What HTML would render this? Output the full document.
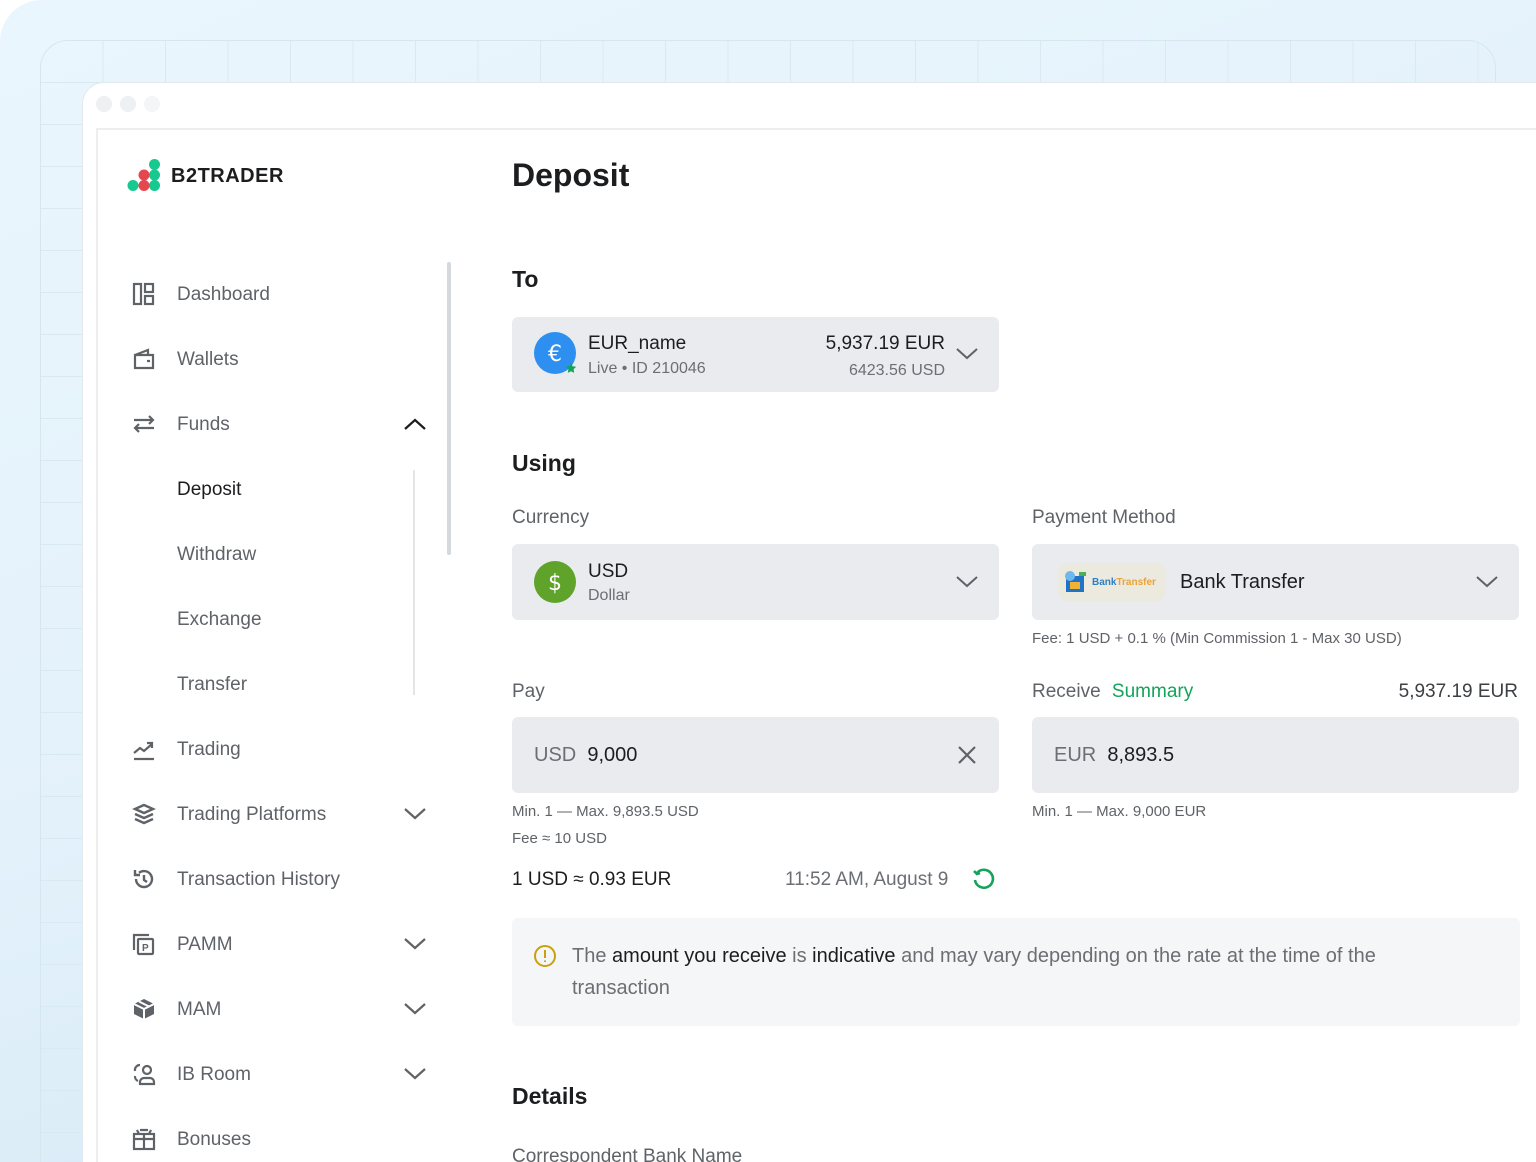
<!DOCTYPE html>
<html style="width:1536px;height:1162px;overflow:hidden"><head><meta charset="utf-8"><style>
*{margin:0;padding:0;box-sizing:border-box}
body{width:1536px;height:1162px;overflow:hidden;background:#fff;font-family:"Liberation Sans",sans-serif;position:relative}
.clip{position:absolute;left:0;top:0;width:1536px;height:1162px;overflow:hidden}
.bg{position:absolute;left:0;top:0;width:1536px;height:1162px;border-radius:42px 0 0 0;background:linear-gradient(160deg,#eaf6fd 0%,#e3f1fb 50%,#cfe5f3 100%);overflow:hidden}
.outer{position:absolute;left:40px;top:40px;width:1456px;height:1122px;border:1px solid #d6e6f0;border-bottom:none;border-radius:28px 28px 0 0;
background-image:linear-gradient(#d9e9f3 1px,transparent 1px),linear-gradient(90deg,#d9e9f3 1px,transparent 1px);background-size:62.5px 42px;background-position:-1px -1px}
.win{position:absolute;left:82px;top:82px;width:1454px;height:1080px;background:#fff;border-radius:22px 0 0 0;border:1px solid #e3eaef;border-right:none;border-bottom:none}
.dot{position:absolute;top:96px;width:16px;height:16px;border-radius:50%;background:#eef0f2}
.inner{position:absolute;left:96px;top:128px;width:1440px;height:1034px;border-left:2px solid #eceef0;border-top:2px solid #eceef0}
.t{position:absolute;white-space:nowrap}
.nav{position:absolute;left:177px;font-size:19px;color:#5f6368;transform:translateY(-45%)}
.ic{position:absolute;left:132px;transform:translateY(-50%)}
.chev{position:absolute;left:404px;transform:translateY(-50%)}
.box{position:absolute;background:#e9ebee;border-radius:6px}
.lbl{font-size:19px;color:#5f6368}
.h{font-weight:bold;color:#1c1d1f}
</style></head><body><div class="clip">
<div class="bg"><div class="outer"></div></div>
<div class="win"></div>
<div class="dot" style="left:96px"></div><div class="dot" style="left:120px"></div><div class="dot" style="left:144px;background:#f3f5f6"></div>
<div class="inner"></div>

<svg class="t" style="left:126px;top:158px" width="36" height="36"><circle cx="28.5" cy="6.5" r="5.5" fill="#17c98f"/><circle cx="28.5" cy="17" r="5.5" fill="#17c98f"/><circle cx="28.5" cy="27.5" r="5.5" fill="#17c98f"/><circle cx="18" cy="17" r="5.5" fill="#e5474e"/><circle cx="18" cy="27.5" r="5.5" fill="#e5474e"/><circle cx="7" cy="27.5" r="5.5" fill="#17c98f"/></svg>
<div class="t" style="left:171px;top:165px;font-size:20px;font-weight:bold;color:#1c1d1f;letter-spacing:.5px">B2TRADER</div>

<div style="position:absolute;left:447px;top:262px;width:4px;height:293px;background:#d5d8dc;border-radius:2px"></div>
<div style="position:absolute;left:413px;top:470px;width:2px;height:225px;background:#e3e5e8"></div>

<svg class="ic" style="top:294px" width="24" height="24" fill="none" stroke="#5f6368" stroke-width="2.2"><rect x="2" y="2" width="7" height="20"/><rect x="13" y="2" width="8" height="8"/><rect x="13" y="14" width="8" height="8"/></svg><div class="nav" style="top:294px">Dashboard</div>
<svg class="ic" style="top:359px" width="24" height="24" fill="none" stroke="#5f6368" stroke-width="2.2"><path d="M3 8h18v13H3zM3 8l13-5v5M15 14h3"/></svg><div class="nav" style="top:359px">Wallets</div>
<svg class="ic" style="top:424px" width="24" height="24" fill="none" stroke="#5f6368" stroke-width="2.2"><path d="M2 8h19M17 4l4 4-4 4M22 16H3M7 12l-4 4 4 4"/></svg><div class="nav" style="top:424px">Funds</div>
<svg class="chev" style="top:424px" width="22" height="14" fill="none" stroke="#1c1d1f" stroke-width="2.2"><path d="M1 12L11 3l10 9"/></svg>
<div class="nav" style="top:489px;color:#1c1d1f">Deposit</div>
<div class="nav" style="top:554px">Withdraw</div>
<div class="nav" style="top:619px">Exchange</div>
<div class="nav" style="top:684px">Transfer</div>
<svg class="ic" style="top:749px" width="24" height="24" fill="none" stroke="#5f6368" stroke-width="2.2"><path d="M2 22h20M2 16l6-5 4 3 8-7M15 6h5v5"/></svg><div class="nav" style="top:749px">Trading</div>
<svg class="ic" style="top:814px" width="24" height="24" fill="none" stroke="#5f6368" stroke-width="2.4"><path d="M12 3l9 4-9 4-9-4zM3 12l9 4 9-4M3 17l9 4 9-4"/></svg><div class="nav" style="top:814px">Trading Platforms</div>
<svg class="chev" style="top:814px" width="22" height="14" fill="none" stroke="#5f6368" stroke-width="2.2"><path d="M1 2l10 9 10-9"/></svg>
<svg class="ic" style="top:879px" width="24" height="24" fill="none" stroke="#5f6368" stroke-width="2.4"><path d="M4 12a8 8 0 1 0 3-6.2M3 3v5h5M12 8v5l3 2"/></svg><div class="nav" style="top:879px">Transaction History</div>
<svg class="ic" style="top:944px" width="24" height="24" fill="none" stroke="#5f6368" stroke-width="2.2"><path d="M2 18V3h15"/><rect x="6" y="7" width="15" height="15" rx="1"/><text x="10" y="19" font-size="10" font-weight="bold" fill="#5f6368" stroke="none" font-family="Liberation Sans">P</text></svg><div class="nav" style="top:944px">PAMM</div>
<svg class="chev" style="top:944px" width="22" height="14" fill="none" stroke="#5f6368" stroke-width="2.2"><path d="M1 2l10 9 10-9"/></svg>
<svg class="ic" style="top:1009px" width="24" height="24"><path d="M12 2l10 5v10l-10 5-10-5V7z" fill="#5f6368"/><path d="M2 7l10 5 10-5M12 12v10M7 4.5l10 5" stroke="#fff" stroke-width="2" fill="none"/></svg><div class="nav" style="top:1009px">MAM</div>
<svg class="chev" style="top:1009px" width="22" height="14" fill="none" stroke="#5f6368" stroke-width="2.2"><path d="M1 2l10 9 10-9"/></svg>
<svg class="ic" style="top:1074px" width="24" height="24" fill="none" stroke="#5f6368" stroke-width="2.2"><circle cx="15" cy="8" r="4"/><path d="M8 22v-2a4 4 0 0 1 4-4h6a4 4 0 0 1 4 4v2zM3 9a5 5 0 0 1 5-6M3 14a5 5 0 0 0 3 5"/></svg><div class="nav" style="top:1074px">IB Room</div>
<svg class="chev" style="top:1074px" width="22" height="14" fill="none" stroke="#5f6368" stroke-width="2.2"><path d="M1 2l10 9 10-9"/></svg>
<svg class="ic" style="top:1139px" width="24" height="24" fill="none" stroke="#5f6368" stroke-width="2.2"><rect x="2" y="7" width="20" height="15"/><path d="M2 12h20M12 7v15M7 7l-2-4M17 7l2-4M8 3h8"/></svg><div class="nav" style="top:1139px">Bonuses</div>

<div class="t h" style="left:512px;top:157px;font-size:32px">Deposit</div>
<div class="t h" style="left:512px;top:266px;font-size:23px">To</div>
<div class="box" style="left:512px;top:317px;width:487px;height:75px"></div>
<svg class="t" style="left:533px;top:332px" width="46" height="46"><circle cx="22" cy="21" r="21" fill="#2d8ff0"/><text x="22" y="29" font-size="22" fill="#fff" text-anchor="middle" font-family="DejaVu Sans">€</text><path d="M38 31l1.6 3.3 3.6.5-2.6 2.5.6 3.6-3.2-1.7-3.2 1.7.6-3.6-2.6-2.5 3.6-.5z" fill="#14a35a"/></svg>
<div class="t" style="left:588px;top:333px;font-size:19px;color:#1c1d1f">EUR_name</div>
<div class="t" style="left:588px;top:360px;font-size:16px;color:#6b6f74">Live • ID 210046</div>
<div class="t" style="right:591px;top:333px;font-size:19px;color:#1c1d1f">5,937.19 EUR</div>
<div class="t" style="right:591px;top:362px;font-size:16px;color:#6b6f74">6423.56 USD</div>
<svg class="t" style="left:956px;top:347px" width="22" height="14" fill="none" stroke="#5f6368" stroke-width="2"><path d="M1 2l10 9 10-9"/></svg>

<div class="t h" style="left:512px;top:450px;font-size:23px">Using</div>
<div class="t lbl" style="left:512px;top:507px">Currency</div>
<div class="t lbl" style="left:1032px;top:507px">Payment Method</div>
<div class="box" style="left:512px;top:544px;width:487px;height:76px"></div>
<svg class="t" style="left:533px;top:560px" width="44" height="44"><circle cx="22" cy="22" r="21" fill="#5fa32a"/><text x="22" y="30" font-size="22" fill="#fff" text-anchor="middle" font-family="DejaVu Sans">$</text></svg>
<div class="t" style="left:588px;top:561px;font-size:19px;color:#1c1d1f">USD</div>
<div class="t" style="left:588px;top:587px;font-size:16px;color:#6b6f74">Dollar</div>
<svg class="t" style="left:956px;top:575px" width="22" height="14" fill="none" stroke="#5f6368" stroke-width="2"><path d="M1 2l10 9 10-9"/></svg>
<div class="box" style="left:1032px;top:544px;width:487px;height:76px"></div>
<div class="t" style="left:1058px;top:563px;width:108px;height:38px;background:#ece9df;border-radius:10px"></div>
<svg class="t" style="left:1064px;top:570px" width="24" height="24"><rect x="2" y="6" width="18" height="16" fill="#1f74c7"/><circle cx="6" cy="6" r="5" fill="#6cb8ef"/><rect x="15" y="2" width="7" height="4" fill="#4caf50"/><rect x="6" y="12" width="10" height="7" fill="#f2b233"/></svg>
<div class="t" style="left:1092px;top:577px;font-size:10px;font-weight:bold;color:#2d7fc9">Bank<span style="color:#e8a33a">Transfer</span></div>
<div class="t" style="left:1180px;top:571px;font-size:20px;color:#1c1d1f">Bank Transfer</div>
<svg class="t" style="left:1476px;top:575px" width="22" height="14" fill="none" stroke="#5f6368" stroke-width="2"><path d="M1 2l10 9 10-9"/></svg>
<div class="t" style="left:1032px;top:630px;font-size:15px;color:#5f6368">Fee: 1 USD + 0.1 % (Min Commission 1 - Max 30 USD)</div>

<div class="t lbl" style="left:512px;top:681px">Pay</div>
<div class="t lbl" style="left:1032px;top:681px">Receive <span style="color:#14a35a;margin-left:6px">Summary</span></div>
<div class="t" style="right:18px;top:681px;font-size:19px;color:#3c3f43">5,937.19 EUR</div>
<div class="box" style="left:512px;top:717px;width:487px;height:76px"></div>
<div class="t" style="left:534px;top:744px;font-size:20px;color:#6b6f74">USD&nbsp; <span style="color:#1c1d1f">9,000</span></div>
<svg class="t" style="left:957px;top:745px" width="20" height="20" stroke="#5f6368" stroke-width="2.2"><path d="M2 2l16 16M18 2L2 18"/></svg>
<div class="box" style="left:1032px;top:717px;width:487px;height:76px"></div>
<div class="t" style="left:1054px;top:744px;font-size:20px;color:#6b6f74">EUR&nbsp; <span style="color:#1c1d1f">8,893.5</span></div>
<div class="t" style="left:512px;top:803px;font-size:15px;color:#5f6368">Min. 1 — Max. 9,893.5 USD</div>
<div class="t" style="left:512px;top:830px;font-size:15px;color:#5f6368">Fee ≈ 10 USD</div>
<div class="t" style="left:1032px;top:803px;font-size:15px;color:#5f6368">Min. 1 — Max. 9,000 EUR</div>

<div class="t" style="left:512px;top:869px;font-size:19px;color:#1c1d1f">1 USD ≈ 0.93 EUR</div>
<div class="t" style="left:785px;top:869px;font-size:19px;color:#6b6f74">11:52 AM, August 9</div>
<svg class="t" style="left:971px;top:868px" width="24" height="24" fill="none" stroke="#14a35a" stroke-width="2.6"><path d="M6 5a9 9 0 1 1-2 7M3 3l3 3 3-1"/></svg>

<div class="t" style="left:512px;top:918px;width:1008px;height:108px;background:#f5f6f8;border-radius:6px"></div>
<svg class="t" style="left:533px;top:944px" width="24" height="24" fill="none" stroke="#c9a10e" stroke-width="2"><circle cx="12" cy="12" r="10"/><path d="M12 6v8M12 16.5v1.5"/></svg>
<div class="t" style="left:572px;top:940px;font-size:20px;line-height:32px;color:#6b6f74">The <span style="color:#1c1d1f">amount you receive</span> is <span style="color:#1c1d1f">indicative</span> and may vary depending on the rate at the time of the<br>transaction</div>

<div class="t h" style="left:512px;top:1083px;font-size:23px">Details</div>
<div class="t lbl" style="left:512px;top:1146px;height:16px;overflow:hidden">Correspondent Bank Name</div>
</div></body></html>
